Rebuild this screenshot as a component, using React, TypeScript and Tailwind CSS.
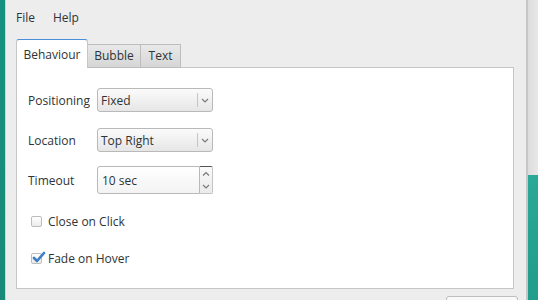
import { useState } from "react";

function Chevron({ up }: { up?: boolean }) {
  return (
    <svg width="8" height="5" viewBox="0 0 8 5" className="block">
      <path
        d={up ? "M1 4.5 L4 1.5 L7 4.5" : "M1 1 L4 4 L7 1"}
        fill="none"
        stroke="#7a7a7a"
        strokeWidth="1.2"
      />
    </svg>
  );
}

function Select({ value }: { value: string }) {
  return (
    <div className="w-[116px] h-[24px] flex items-stretch border border-[#b9b9b9] rounded-[3px] bg-gradient-to-b from-[#fbfbfb] to-[#e6e6e6] shadow-[0_1px_0_rgba(255,255,255,0.8)]">
      <div className="flex-1 flex items-center pl-[3px] pt-[2px] text-[#2e3436]">{value}</div>
      <div className="w-px my-[4px] bg-[#c4c4c4]" />
      <div className="w-[14px] flex items-center justify-center">
        <Chevron />
      </div>
    </div>
  );
}

function Spin({ value }: { value: string }) {
  return (
    <div className="w-[116px] h-[28px] flex items-stretch">
      <div className="flex-1 flex items-center pl-[4px] pt-[1px] border border-[#b9b9b9] rounded-l-[3px] bg-gradient-to-b from-[#ffffff] to-[#f3f3f3] text-[#2e3436]">
        {value}
      </div>
      <div className="w-[13px] flex flex-col border border-l-0 border-[#c4c4c4] border-t-[#555] rounded-r-[2px] bg-gradient-to-b from-[#fafafa] to-[#ebebeb]">
        <div className="flex-1 flex items-center justify-center">
          <Chevron up />
        </div>
        <div className="flex-1 flex items-center justify-center">
          <Chevron />
        </div>
      </div>
    </div>
  );
}

function Check({ checked, label }: { checked?: boolean; label: string }) {
  return (
    <div className="flex items-center pl-[14px] h-[20px]">
      <div className="relative w-[11px] h-[11px] border border-[#bdbdbd] rounded-[2px] bg-gradient-to-b from-[#ffffff] to-[#ececec]">
        {checked && (
          <svg width="14" height="13" viewBox="0 0 14 13" className="absolute left-[0px] top-[-3px]">
            <path
              d="M2 7 L5 10 L12 2"
              fill="none"
              stroke="#3e7fc4"
              strokeWidth="2.6"
              strokeLinecap="round"
              strokeLinejoin="round"
            />
          </svg>
        )}
      </div>
      <span className="ml-[6px] pt-[2px] text-[#2e3436]">{label}</span>
    </div>
  );
}

export default function App() {
  const [tab] = useState("Behaviour");
  const tabs = ["Behaviour", "Bubble", "Text"];

  return (
    <div
      className="w-[538px] h-[300px] overflow-hidden flex text-[12px] leading-none"
      style={{ fontFamily: '"Open Sans", "DejaVu Sans", sans-serif' }}
    >
      {/* desktop on the left */}
      <div className="w-[5px] shrink-0 bg-gradient-to-b from-[#16917f] to-[#1a8a78]" />

      {/* window */}
      <div className="w-[523px] shrink-0 flex flex-col bg-[#ededed] border-l border-[#d4d4d4] border-r-2 border-r-[#c6c6c6]">
        {/* menu bar */}
        <div className="h-[35px] shrink-0 flex items-center pl-[10px] pt-[1px] gap-[18px] text-[#2e3436]">
          <span>File</span>
          <span>Help</span>
        </div>

        {/* tabs */}
        <div className="ml-[10px] mt-[4px] h-[29px] flex items-end relative z-10 -mb-px">
          {tabs.map((t) =>
            t === tab ? (
              <div
                key={t}
                className="h-[29px] w-[72px] flex items-center justify-center pt-[2px] bg-white border border-b-0 border-[#c6c6c6] border-t-[#4a90d9] rounded-t-[3px] text-[#2e3436]"
              >
                {t}
              </div>
            ) : (
              <div
                key={t}
                className={`h-[24px] ${t === "Bubble" ? "w-[53px]" : "w-[40px]"} flex items-center justify-center border border-l-0 border-[#bdbdbd] bg-gradient-to-b from-[#e9e9e9] to-[#d6d6d6] text-[#2e3436]`}
              >
                {t}
              </div>
            )
          )}
        </div>

        {/* page */}
        <div className="ml-[10px] mr-[12px] h-[222px] shrink-0 bg-white border border-[#c6c6c6] flex flex-col">
          <div className="flex items-center pl-[11px] mt-[20px]">
            <span className="w-[69px] pt-[2px] text-[#2e3436]">Positioning</span>
            <Select value="Fixed" />
          </div>
          <div className="flex items-center pl-[11px] mt-[16px]">
            <span className="w-[69px] pt-[2px] text-[#2e3436]">Location</span>
            <Select value="Top Right" />
          </div>
          <div className="flex items-center pl-[11px] mt-[14px]">
            <span className="w-[69px] pt-[2px] text-[#2e3436]">Timeout</span>
            <Spin value="10 sec" />
          </div>
          <div className="mt-[17px]">
            <Check label="Close on Click" />
          </div>
          <div className="mt-[17px]">
            <Check checked label="Fade on Hover" />
          </div>
        </div>

        {/* dialog button peeking in */}
        <div className="flex justify-end mr-[8px] mt-[7px]">
          <div className="w-[72px] h-[20px] border border-[#bdbdbd] rounded-t-[3px] bg-gradient-to-b from-[#fafafa] to-[#eaeaea]" />
        </div>
      </div>

      {/* right side: neighbouring window shadow and desktop */}
      <div className="flex-1 flex flex-col">
        <div className="h-[175px] bg-gradient-to-r from-[#dcdcdc] to-[#e8e8e8]" />
        <div className="flex-1 bg-gradient-to-b from-[#2aa898] to-[#229c8b]" />
      </div>
    </div>
  );
}
